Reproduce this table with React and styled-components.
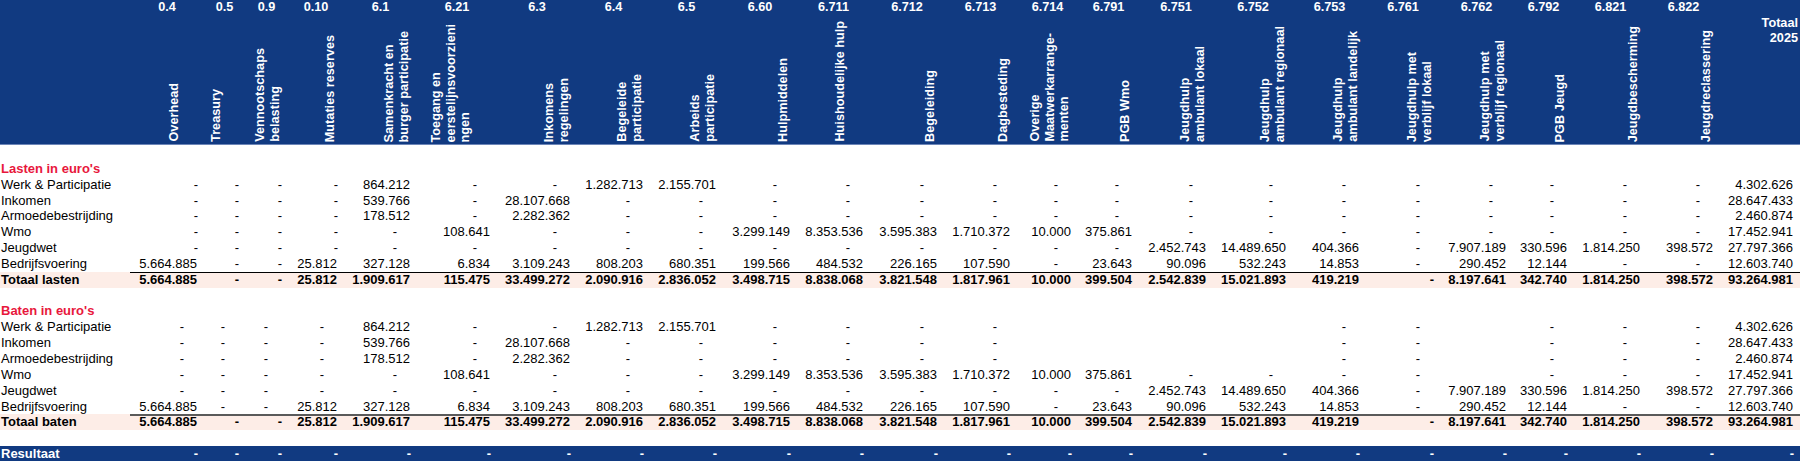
import styled, { createGlobalStyle } from 'styled-components';

const GlobalStyle = createGlobalStyle`
  html, body {
    margin: 0;
    padding: 0;
    background: #ffffff;
  }
  body {
    font-family: "Liberation Sans", Arial, sans-serif;
    font-size: 13px;
    color: #000000;
  }
`;

const BLUE = '#113a81';

// pad = extra room on the right of a rotated header (an empty trailing line in the sheet)
const columns = [
  { code: '0.4', width: 74, label: ['Overhead'], pad: 22 },
  { code: '0.5', width: 41, label: ['Treasury'], pad: 21 },
  { code: '0.9', width: 43, label: ['Vennootschaps', 'belasting'] },
  { code: '0.10', width: 56, label: ['Mutaties reserves'] },
  { code: '6.1', width: 73, label: ['Samenkracht en', 'burger participatie'] },
  { code: '6.21', width: 80, label: ['Toegang en', 'eerstelijnsvoorzieni', 'ngen'], pad: 24 },
  { code: '6.3', width: 80, label: ['Inkomens', 'regelingen'] },
  { code: '6.4', width: 73, label: ['Begeleide', 'participatie'] },
  { code: '6.5', width: 73, label: ['Arbeids', 'participatie'] },
  { code: '6.60', width: 74, label: ['Hulpmiddelen'] },
  { code: '6.711', width: 73, label: ['Huishoudelijke hulp'], pad: 22 },
  { code: '6.712', width: 74, label: ['Begeleiding'] },
  { code: '6.713', width: 73, label: ['Dagbesteding'] },
  { code: '6.714', width: 61, label: ['Overige', 'Maatwerkarrange-', 'menten'] },
  { code: '6.791', width: 61, label: ['PGB Wmo'] },
  { code: '6.751', width: 74, label: ['Jeugdhulp', 'ambulant lokaal'] },
  { code: '6.752', width: 80, label: ['Jeugdhulp', 'ambulant regionaal'] },
  { code: '6.753', width: 73, label: ['Jeugdhulp', 'ambulant landelijk'] },
  { code: '6.761', width: 74, label: ['Jeugdhulp met', 'verblijf lokaal'] },
  { code: '6.762', width: 73, label: ['Jeugdhulp met', 'verblijf regionaal'] },
  { code: '6.792', width: 61, label: ['PGB Jeugd'] },
  { code: '6.821', width: 73, label: ['Jeugdbescherming'] },
  { code: '6.822', width: 73, label: ['Jeugdreclassering'] },
];

const template = `130px ${columns.map((c) => `${c.width}px`).join(' ')} 80px`;

// '-' = dash, '~' = dash set close to the right edge, '' = empty cell
const lasten = [
  ['Werk & Participatie', ['~', '~', '~', '~', '864.212', '-', '-', '1.282.713', '2.155.701', '-', '-', '-', '-', '-', '-', '-', '-', '-', '-', '-', '-', '-', '-', '4.302.626']],
  ['Inkomen', ['~', '~', '~', '~', '539.766', '-', '28.107.668', '-', '-', '-', '-', '-', '-', '-', '-', '-', '-', '-', '-', '-', '-', '-', '-', '28.647.433']],
  ['Armoedebestrijding', ['~', '~', '~', '~', '178.512', '-', '2.282.362', '-', '-', '-', '-', '-', '-', '-', '-', '-', '-', '-', '-', '-', '-', '-', '-', '2.460.874']],
  ['Wmo', ['~', '~', '~', '~', '-', '108.641', '-', '-', '-', '3.299.149', '8.353.536', '3.595.383', '1.710.372', '10.000', '375.861', '-', '-', '-', '-', '-', '-', '-', '-', '17.452.941']],
  ['Jeugdwet', ['~', '~', '~', '~', '-', '-', '-', '-', '-', '-', '-', '-', '-', '-', '-', '2.452.743', '14.489.650', '404.366', '-', '7.907.189', '330.596', '1.814.250', '398.572', '27.797.366']],
  ['Bedrijfsvoering', ['5.664.885', '~', '~', '25.812', '327.128', '6.834', '3.109.243', '808.203', '680.351', '199.566', '484.532', '226.165', '107.590', '-', '23.643', '90.096', '532.243', '14.853', '-', '290.452', '12.144', '-', '-', '12.603.740']],
];

const baten = [
  ['Werk & Participatie', ['-', '-', '-', '-', '864.212', '-', '-', '1.282.713', '2.155.701', '-', '-', '-', '-', '', '', '', '', '-', '-', '', '-', '-', '-', '4.302.626']],
  ['Inkomen', ['-', '-', '-', '-', '539.766', '-', '28.107.668', '-', '-', '-', '-', '-', '-', '', '', '', '', '-', '-', '', '-', '-', '-', '28.647.433']],
  ['Armoedebestrijding', ['-', '-', '-', '-', '178.512', '-', '2.282.362', '-', '-', '-', '-', '-', '-', '', '', '', '', '-', '-', '', '-', '-', '-', '2.460.874']],
  ['Wmo', ['-', '-', '-', '-', '-', '108.641', '-', '-', '-', '3.299.149', '8.353.536', '3.595.383', '1.710.372', '10.000', '375.861', '-', '-', '-', '-', '', '-', '-', '-', '17.452.941']],
  ['Jeugdwet', ['-', '-', '-', '-', '-', '-', '-', '-', '-', '-', '-', '-', '-', '-', '-', '2.452.743', '14.489.650', '404.366', '-', '7.907.189', '330.596', '1.814.250', '398.572', '27.797.366']],
  ['Bedrijfsvoering', ['5.664.885', '-', '-', '25.812', '327.128', '6.834', '3.109.243', '808.203', '680.351', '199.566', '484.532', '226.165', '107.590', '-', '23.643', '90.096', '532.243', '14.853', '-', '290.452', '12.144', '-', '-', '12.603.740']],
];

const totals = ['5.664.885', '~', '~', '25.812', '1.909.617', '115.475', '33.499.272', '2.090.916', '2.836.052', '3.498.715', '8.838.068', '3.821.548', '1.817.961', '10.000', '399.504', '2.542.839', '15.021.893', '419.219', '~', '8.197.641', '342.740', '1.814.250', '398.572', '93.264.981'];

const resultaat = Array(24).fill('~');

const Sheet = styled.div`
  width: 1800px;
  overflow: hidden;
`;

const HeaderBand = styled.div`
  background: ${BLUE};
  color: #ffffff;
  font-weight: bold;
  font-size: 12.7px;
  border-bottom: 1px solid #6d86b8;
  box-sizing: border-box;
  height: 145px;
`;

const CodeRow = styled.div`
  display: grid;
  grid-template-columns: ${template};
  height: 16px;
  line-height: 15px;
`;

const Code = styled.div`
  text-align: center;
  white-space: nowrap;
`;

const LabelRow = styled.div`
  display: grid;
  grid-template-columns: ${template};
  height: 128px;
`;

const LabelCell = styled.div`
  display: flex;
  justify-content: flex-end;
  align-items: flex-end;
  padding: 0 ${({ $pad }) => $pad}px 2px 0;
`;

const VerticalText = styled.div`
  writing-mode: vertical-rl;
  transform: rotate(180deg);
  line-height: 14.6px;
  white-space: nowrap;
`;

const TotalHead = styled.div`
  text-align: right;
  padding-right: 2px;
  line-height: 15px;
`;

const Row = styled.div`
  display: grid;
  grid-template-columns: ${template};
  height: 15.85px;
  line-height: 15.85px;
  font-weight: ${({ $bold }) => ($bold ? 'bold' : 'normal')};
  background: ${({ $bg }) => $bg || 'transparent'};
  color: ${({ $fg }) => $fg || '#000000'};
`;

const Label = styled.div`
  padding-left: 1px;
  white-space: nowrap;
`;

const SectionTitle = styled(Label)`
  grid-column: 1 / -1;
  color: #e8173c;
  font-weight: bold;
`;

const Value = styled.div`
  text-align: right;
  white-space: nowrap;
  padding-right: ${({ $kind }) => ($kind === 'dash' ? 20 : $kind === 'near' ? 6 : 7)}px;
  box-shadow: ${({ $rule }) => $rule || 'none'};
`;

const kindOf = (v) => (v === '-' ? 'dash' : v === '~' ? 'near' : 'num');

const Values = ({ values, rule }) =>
  values.map((v, i) => (
    <Value key={i} $kind={kindOf(v)} $rule={rule}>
      {v === '~' ? '-' : v}
    </Value>
  ));

const Section = ({ title, rows, totalLabel, rule }) => (
  <>
    <Row>
      <SectionTitle>{title}</SectionTitle>
    </Row>
    {rows.map(([name, values]) => (
      <Row key={name}>
        <Label>{name}</Label>
        <Values values={values} />
      </Row>
    ))}
    <Row $bold $bg="#fdede7">
      <Label>{totalLabel}</Label>
      <Values values={totals} rule={rule} />
    </Row>
    <Row />
  </>
);

const App = () => (
  <>
    <GlobalStyle />
    <Sheet>
      <HeaderBand>
        <CodeRow>
          <div />
          {columns.map((c) => (
            <Code key={c.code}>{c.code}</Code>
          ))}
          <div />
        </CodeRow>
        <LabelRow>
          <div />
          {columns.map((c) => (
            <LabelCell key={c.code} $pad={c.pad || 6}>
              <VerticalText>
                {c.label.map((line, i) => (
                  <div key={i}>{line}</div>
                ))}
              </VerticalText>
            </LabelCell>
          ))}
          <TotalHead>
            Totaal
            <br />
            2025
          </TotalHead>
        </LabelRow>
      </HeaderBand>
      <Row />
      <Section title="Lasten in euro's" rows={lasten} totalLabel="Totaal lasten" rule="inset 0 1px 0 #000000" />
      <Section title="Baten in euro's" rows={baten} totalLabel="Totaal baten" rule="inset 0 2px 0 #5a5a5a" />
      <Row $bold $bg={BLUE} $fg="#ffffff">
        <Label>Resultaat</Label>
        <Values values={resultaat} />
      </Row>
    </Sheet>
  </>
);

export default App;
